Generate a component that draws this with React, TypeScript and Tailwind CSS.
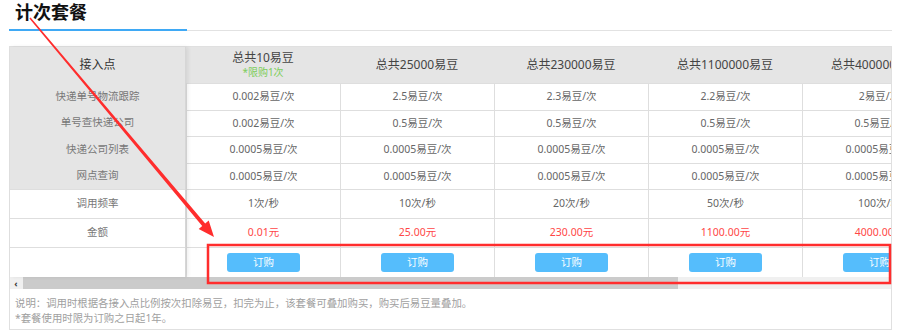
import React from 'react';

const rowHeights = ['h-[27px]', 'h-[26px]', 'h-[27px]', 'h-[26px]', 'h-[29px]', 'h-[29px]', 'h-[30px]'];

const labels = ['快递单号物流跟踪', '单号查快递公司', '快递公司列表', '网点查询', '调用频率', '金额', ''];

type Plan = {
  title: string;
  limit?: string;
  cells: string[];
  price: string;
};

const plans: Plan[] = [
  {
    title: '总共10易豆',
    limit: '*限购1次',
    cells: ['0.002易豆/次', '0.002易豆/次', '0.0005易豆/次', '0.0005易豆/次', '1次/秒'],
    price: '0.01元',
  },
  {
    title: '总共25000易豆',
    cells: ['2.5易豆/次', '0.5易豆/次', '0.0005易豆/次', '0.0005易豆/次', '10次/秒'],
    price: '25.00元',
  },
  {
    title: '总共230000易豆',
    cells: ['2.3易豆/次', '0.5易豆/次', '0.0005易豆/次', '0.0005易豆/次', '20次/秒'],
    price: '230.00元',
  },
  {
    title: '总共1100000易豆',
    cells: ['2.2易豆/次', '0.5易豆/次', '0.0005易豆/次', '0.0005易豆/次', '50次/秒'],
    price: '1100.00元',
  },
  {
    title: '总共4000000易豆',
    cells: ['2易豆/次', '0.5易豆/次', '0.0005易豆/次', '0.0005易豆/次', '100次/秒'],
    price: '4000.00元',
  },
];

function PlanColumn({ plan }: { plan: Plan }) {
  return (
    <div className="flex w-[154px] shrink-0 flex-col">
      <div className="flex h-[36px] flex-col items-center justify-center bg-[#e5e5e5] leading-[14px]">
        <span className="whitespace-nowrap text-[12px] text-[#444]">{plan.title}</span>
        {plan.limit && <span className="text-[10px] text-[#7ccd5a]">{plan.limit}</span>}
      </div>
      {plan.cells.map((cell, i) => (
        <div
          key={i}
          className={`${rowHeights[i]} flex items-center justify-center whitespace-nowrap border-l border-t border-[#dedede] text-[10.5px] text-[#666]`}
        >
          {cell}
        </div>
      ))}
      <div className="flex h-[29px] items-center justify-center whitespace-nowrap border-l border-t border-[#dedede] text-[10.5px] text-[#ff4646]">
        {plan.price}
      </div>
      <div className="flex h-[30px] items-center justify-center border-l border-t border-[#dedede]">
        <button className="h-[19px] w-[73px] rounded-[3px] bg-[#55bdfc] text-[10.5px] text-white">订购</button>
      </div>
    </div>
  );
}

export default function App() {
  return (
    <div className="relative h-[335px] w-[906px] overflow-hidden bg-white font-['Noto_Sans','Noto_Sans_CJK_SC',sans-serif]">
      <div className="ml-[9px] flex w-[883px] items-end">
        <div className="w-[178px] border-b-2 border-[#3fa9f5] pb-[4px] pl-[6px] text-[18px] font-bold leading-[25px] text-[#111]">
          计次套餐
        </div>
        <div className="flex-1 border-b border-[#e2e2e2]" />
      </div>

      <div className="ml-[9px] mt-[15px] h-[284px] w-[883px] border border-[#e0e0e0]">
        <div className="flex">
          <div className="relative z-10 w-[176px] shrink-0 border-r border-[#d6d6d6] shadow-[2px_0_4px_rgba(0,0,0,0.08)]">
            <div className="bg-[#e5e5e5]">
              <div className="flex h-[36px] items-center justify-center text-[12px] text-[#333]">接入点</div>
              {labels.slice(0, 4).map((label, i) => (
                <div key={label} className={`${rowHeights[i]} flex items-center justify-center text-[10.5px] text-[#777]`}>
                  {label}
                </div>
              ))}
            </div>
            {labels.slice(4).map((label, i) => (
              <div
                key={i}
                className={`${rowHeights[i + 4]} flex items-center justify-center border-t border-[#dedede] bg-white text-[10.5px] text-[#777]`}
              >
                {label}
              </div>
            ))}
          </div>
          <div className="flex w-[706px] overflow-hidden">
            {plans.map((plan) => (
              <PlanColumn key={plan.title} plan={plan} />
            ))}
          </div>
        </div>

        <div className="flex h-[12px] items-stretch bg-[#f0f0f0]">
          <div className="flex w-[12px] items-center justify-center text-[9px] font-bold leading-none text-[#333]">‹</div>
          <div className="ml-[1px] w-[655px] bg-[#cbcbcb]" />
        </div>

        <div className="pl-[5px] pt-[7px] text-[10.4px] leading-[15px] text-[#a0a0a0]">
          <p>说明：调用时根据各接入点比例按次扣除易豆，扣完为止，该套餐可叠加购买，购买后易豆量叠加。</p>
          <p>*套餐使用时限为订购之日起1年。</p>
        </div>
      </div>

      <svg className="pointer-events-none absolute left-0 top-0 z-20" width="906" height="335" viewBox="0 0 906 335">
        <rect x="208" y="245" width="682" height="38" fill="none" stroke="#ff2d2d" strokeWidth="2.5" />
        <polygon
          points="30.6,17.5 205.2,223.4 208.7,220.5 214,237 198.7,228.9 202.2,226 29.4,18.5"
          fill="#ff2d2d"
        />
      </svg>
    </div>
  );
}
